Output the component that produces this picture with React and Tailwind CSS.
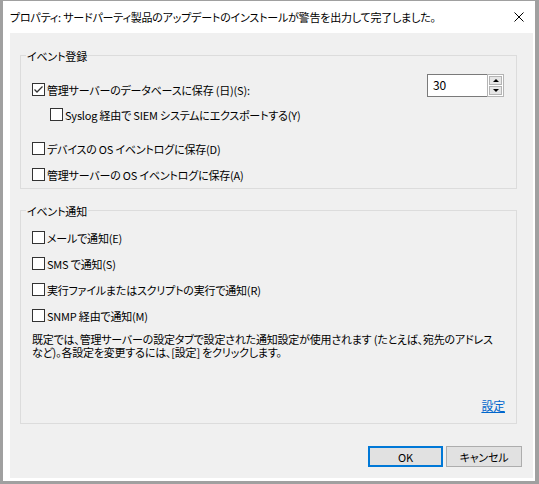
import React from 'react';

const Check = ({ checked, label, className = '' }) => (
  <div className={`flex items-center h-[13px] ${className}`}>
    <span className="w-[13px] h-[13px] shrink-0 border border-[#333333] bg-white flex items-center justify-center">
      {checked && (
        <svg width="11" height="11" viewBox="0 0 11 11">
          <path d="M1.5 5.5 L4 8 L9.5 2.5" fill="none" stroke="#333333" strokeWidth="1.3" />
        </svg>
      )}
    </span>
    <span className="ml-[2px] leading-[16px] whitespace-nowrap">{label}</span>
  </div>
);

const GroupLabel = ({ children }) => (
  <div className="absolute -top-[8px] left-[5px] px-[1px] bg-[#f0f0f0] leading-[16px]">{children}</div>
);

const SpinBox = ({ value }) => (
  <div className="flex w-[77px] h-[23px] bg-white">
    <div className="flex-1 border border-r-0 border-[#7a7a7a] pl-[5px] leading-[19px] text-[12px]">{value}</div>
    <div className="w-[17px] flex flex-col gap-[1px] border border-[#b4b4b4] p-[1px] bg-white">
      <button className="flex-1 border border-[#b4b4b4] bg-[#e6e6e6] flex items-center justify-center">
        <svg width="6" height="3" viewBox="0 0 6 3"><path d="M0 3 L3 0 L6 3 Z" fill="#000" /></svg>
      </button>
      <button className="flex-1 border border-[#b4b4b4] bg-[#e6e6e6] flex items-center justify-center">
        <svg width="6" height="3" viewBox="0 0 6 3"><path d="M0 0 L6 0 L3 3 Z" fill="#000" /></svg>
      </button>
    </div>
  </div>
);

export default function App() {
  return (
    <div className="w-[539px] h-[484px] flex flex-col bg-white border-l-[3px] border-t border-r-[4px] border-b-[3px] border-[#a0a0a0] text-[11px] tracking-[-0.2px] text-black font-['Noto_Sans_CJK_JP','Liberation_Sans',sans-serif] [font-feature-settings:'palt']">
      {/* title bar */}
      <div className="h-[32px] shrink-0 flex items-center justify-between pl-[7px] pr-[11px]">
        <span className="whitespace-nowrap">プロパティ: サードパーティ製品のアップデートのインストールが警告を出力して完了しました。</span>
        <svg width="10" height="10" viewBox="0 0 10 10">
          <path d="M0.5 0.5 L9.5 9.5 M9.5 0.5 L0.5 9.5" stroke="#000" strokeWidth="1" />
        </svg>
      </div>

      {/* client area */}
      <div className="flex-1 ml-[7px] mr-[2px] mb-[3px] bg-[#f0f0f0] flex flex-col">
        <div className="relative ml-[10px] mt-[22px] w-[497px] border border-[#dcdcdc] pb-[7px]">
          <GroupLabel>イベント登録</GroupLabel>
          <div className="flex items-start justify-between pl-[11px] pr-[12px]">
            <Check className="mt-[27px]" checked label="管理サーバーのデータベースに保存 (日)(S):" />
            <div className="mt-[18px]">
              <SpinBox value="30" />
            </div>
          </div>
          <Check className="mt-[11px] ml-[29px]" label="Syslog 経由で SIEM システムにエクスポートする(Y)" />
          <Check className="mt-[21px] ml-[11px]" label="デバイスの OS イベントログに保存(D)" />
          <Check className="mt-[13px] ml-[11px]" label="管理サーバーの OS イベントログに保存(A)" />
        </div>

        <div className="relative ml-[10px] mt-[21px] w-[497px] border border-[#dcdcdc] pb-[11px]">
          <GroupLabel>イベント通知</GroupLabel>
          <Check className="mt-[20px] ml-[11px]" label="メールで通知(E)" />
          <Check className="mt-[13px] ml-[11px]" label="SMS で通知(S)" />
          <Check className="mt-[13px] ml-[11px]" label="実行ファイルまたはスクリプトの実行で通知(R)" />
          <Check className="mt-[13px] ml-[11px]" label="SNMP 経由で通知(M)" />
          <p className="mt-[11px] pl-[11px] leading-[13px] whitespace-nowrap">
            既定では、管理サーバーの設定タブで設定された通知設定が使用されます (たとえば、宛先のアドレス
            <br />
            など)。各設定を変更するには、[設定] をクリックします。
          </p>
          <div className="mt-[40px] pr-[11px] flex justify-end">
            <a href="#" className="leading-[13px] text-[12px] text-[#0066cc] underline">設定</a>
          </div>
        </div>

        <div className="mt-[22px] mr-[11px] flex justify-end gap-[3px]">
          <button className="w-[75px] h-[21px] border-2 border-[#0078d7] bg-[#e1e1e1] leading-[16px]">OK</button>
          <button className="w-[76px] h-[21px] border border-[#adadad] bg-[#e1e1e1] leading-[18px]">キャンセル</button>
        </div>
      </div>
    </div>
  );
}
